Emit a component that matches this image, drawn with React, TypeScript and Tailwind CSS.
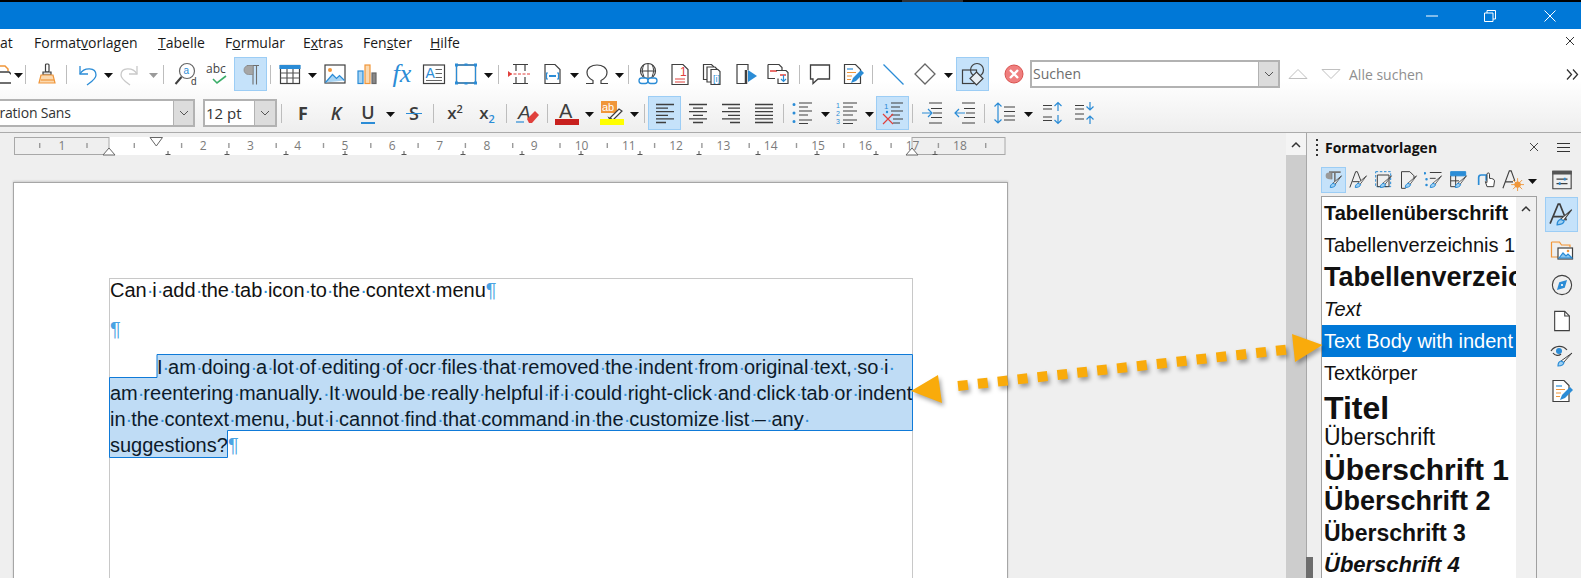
import React from "react";

const D = "#3f3f3f";
const B = "#2b8cd6";
const O = "#f0963a";
const R = "#e0403c";

function I({ children, s = 24 }: { children: React.ReactNode; s?: number }) {
  return (
    <svg width={s} height={s} viewBox="0 0 24 24" fill="none" strokeWidth="1.2" stroke={D} className="shrink-0">
      {children}
    </svg>
  );
}

function Btn({ children, on, x = "" }: { children?: React.ReactNode; on?: boolean; x?: string }) {
  return (
    <div
      className={`flex h-[34px] w-[32px] shrink-0 items-center justify-center ${
        on ? "w-[33px] border border-[#9ccdf5] bg-[#c5e2fa]" : ""
      } ${x}`}
    >
      {children}
    </div>
  );
}

function Dd({ c = "#111", x = "" }: { c?: string; x?: string }) {
  return (
    <div className={`flex h-[34px] w-[13px] shrink-0 items-center justify-center ${x}`}>
      <svg width="9" height="5" viewBox="0 0 9 5" className="mt-[2px]">
        <path d="M0 0h9L4.5 5z" fill={c} />
      </svg>
    </div>
  );
}

function Sep({ x = "" }: { x?: string }) {
  return (
    <div className={`flex h-[34px] w-[7px] shrink-0 items-center justify-center ${x}`}>
      <div className="h-[19px] w-px bg-[#bdbdbd]" />
    </div>
  );
}

function Chev({ c = "#555" }: { c?: string }) {
  return (
    <svg width="12" height="8" viewBox="0 0 12 8" fill="none" stroke={c} strokeWidth="1">
      <path d="M2 2l4 4 4-4" />
    </svg>
  );
}

function AlignIcon({ rows }: { rows: [number, number][] }) {
  return (
    <I>
      <path strokeWidth="1.3" d={rows.map(([a, b], i) => `M${a} ${3.5 + i * 3.6}H${b}`).join("")} />
    </I>
  );
}

function SBrush() {
  return (
    <g>
      <path d="M21 7L13 17.5l-2.5-1.5z" fill="#fff" stroke={D} strokeWidth="1" />
      <path d="M11 16c-2 .5-3.5 2.5-3.5 5 3 0 6-1 6.5-3.5z" fill="#9fd0f2" stroke={B} strokeWidth="1.2" />
    </g>
  );
}

function Word({ text }: { text: string }) {
  const parts = text.split(" ");
  return (
    <>
      {parts.map((p, i) => (
        <React.Fragment key={i}>
          {p}
          {i < parts.length - 1 && (
            <span className="inline-block w-[5.56px] text-center text-[#2f8fd8]">·</span>
          )}
        </React.Fragment>
      ))}
    </>
  );
}

const rulerNums = [2, 3, 4, 5, 6, 7, 8, 9, 10, 11, 12, 13, 14, 15, 16, 17, 18];
const halfTicks = Array.from({ length: 21 }, (_, i) => 39 + i * 47.3);
const tabStops = Array.from({ length: 14 }, (_, i) => 168 + i * 59);

function Ruler() {
  return (
    <svg width="1010" height="20" viewBox="0 136 1010 20" className="block">
      <rect x="109" y="137" width="803" height="18" fill="#fff" />
      <rect x="14.5" y="137.5" width="94.5" height="17" fill="#efefef" stroke="#a8a8a8" />
      <rect x="912" y="137.5" width="93" height="17" fill="#efefef" stroke="#a8a8a8" />
      {halfTicks.map((x) => (
        <rect key={x} x={x} y="143" width="1.4" height="5" fill="#9a9a9a" />
      ))}
      {tabStops.map((x) => (
        <path key={x} d={`M${x} 151v3.5M${x - 2.5} 154.5h5`} stroke="#555" strokeWidth="1" />
      ))}
      <text x="62" y="150" fontSize="12" fill="#7b7b7b" textAnchor="middle" fontFamily="'Open Sans',sans-serif">
        1
      </text>
      {rulerNums.map((n) => (
        <text
          key={n}
          x={109 + n * 47.3 - 0.5}
          y="150"
          fontSize="12"
          fill="#7b7b7b"
          textAnchor="middle"
          fontFamily="'Open Sans',sans-serif"
        >
          {n}
        </text>
      ))}
      <path d="M150 137.5h12.5l-6.2 8.5z" fill="#fff" stroke="#666" />
      <path d="M103 155l6-7 6 7z" fill="#fff" stroke="#666" />
      <path d="M906 155l6-7 6 7z" fill="#fff" stroke="#666" />
    </svg>
  );
}

function DocPage() {
  return (
    <div className="ml-[13px] mt-[26px] h-[400px] w-[995px] border border-[#a6a6a6] bg-white pl-[95px] pt-[95px] shadow-[0_-1px_2px_rgba(0,0,0,0.15)]">
      <div className="relative h-[300px] w-[804px] border-x border-t border-[#c8c8c8] font-['Liberation_Sans',sans-serif] text-[20px] text-[#111]">
        <svg width="806" height="182" viewBox="0 0 806 182" className="absolute left-[-1px] top-[-1px]">
          <path
            d="M48 76.5H803.5V152.5H118.5V179.5H.5V99.5H48z"
            fill="#bfdcf5"
            stroke="#0f7ad8"
            strokeWidth="1"
          />
        </svg>
        <div className="relative whitespace-nowrap">
          <div className="h-[22px] leading-[22px]">
            <Word text="Can i add the tab icon to the context menu" />
            <span className="text-[#4aa3e3]">¶</span>
          </div>
          <div className="mt-[17px] h-[22px] leading-[22px] text-[#4aa3e3]">¶</div>
          <div className="mt-[14px] text-[#0c1a2a]">
            <div className="h-[26px] pl-[47px] leading-[26px]">
              <Word text="I am doing a lot of editing of ocr files that removed the indent from original text, so i " />
            </div>
            <div className="h-[26px] leading-[26px]">
              <Word text="am reentering manually. It would be really helpful if i could right-click and click tab or indent" />
            </div>
            <div className="h-[26px] leading-[26px]">
              <Word text="in the context menu, but i cannot find that command in the customize list – any " />
            </div>
            <div className="h-[26px] leading-[26px]">
              <Word text="suggestions?" />
              <span className="text-[#4aa3e3]">¶</span>
            </div>
          </div>
        </div>
      </div>
    </div>
  );
}

function Row1() {
  return (
    <div className="flex h-[34px] items-center whitespace-nowrap">
      <div className="flex h-[34px] w-[11px] shrink-0 items-center overflow-hidden">
        <svg width="15" height="24" viewBox="0 0 15 24" fill="none" className="shrink-0">
          <path d="M0 4h5l3 3v2" stroke={O} strokeWidth="1.5" />
          <path d="M0 10h9l3 3v8H0" stroke={D} strokeWidth="1.3" />
        </svg>
      </div>
      <Dd x="ml-[1px]" />
      <Sep x="ml-[-3px]" />
      <Btn x="ml-[2px]">
        <I>
          <rect x="10.5" y="2" width="3.5" height="8" rx="1" stroke={D} fill="#fff" />
          <path d="M8 10h8v3H8z" stroke={D} fill="#ddd" />
          <path d="M6 13h12l2 8H4z" stroke={O} fill="#fbd9b0" />
          <path d="M6 18h13" stroke={O} />
        </I>
      </Btn>
      <Sep />
      <Btn>
        <I>
          <path d="M6 4v8h8" stroke={B} strokeWidth="1.3" />
          <path d="M6 12C10 5 22 5 22 13c0 4-5 7-9 10" stroke={B} strokeWidth="1.3" />
        </I>
      </Btn>
      <Dd />
      <Btn>
        <I>
          <path d="M18 4v8h-8" stroke="#c9c9c9" strokeWidth="1.3" />
          <path d="M18 12C14 5 2 5 2 13c0 4 5 7 9 10" stroke="#c9c9c9" strokeWidth="1.3" />
        </I>
      </Btn>
      <Dd c="#9a9a9a" />
      <Sep />
      <Btn x="ml-[3px]">
        <I>
          <circle cx="13" cy="9" r="7.5" stroke="#666" />
          <path d="M7.5 15L1.5 22" stroke={D} strokeWidth="2" />
          <text x="9.5" y="12" fontSize="10" fill={B} stroke="none" fontFamily="'Liberation Sans',sans-serif">
            a
          </text>
          <text x="17" y="23" fontSize="10" fill={D} stroke="none" fontFamily="'Liberation Sans',sans-serif">
            d
          </text>
        </I>
      </Btn>
      <Btn>
        <svg width="26" height="24" viewBox="0 0 26 24" fill="none" className="shrink-0">
          <text x="1" y="11" fontSize="12" fill="#444" fontFamily="'Open Sans',sans-serif">
            abc
          </text>
          <path d="M8 17l4 4 9-7" stroke="#3cae6a" strokeWidth="1.6" />
        </svg>
      </Btn>
      <Btn on>
        <I>
          <path d="M8 3.5h12M14 3.5V22.500M17.500 3.500V22.500" stroke="#6f6f6f" strokeWidth="1.100" />
          <path d="M14 3.5H9.500a4.500 4.500 0 000 9H14z" fill="#a6a6a6" stroke="#8a8a8a" strokeWidth=".8" />
        </I>
      </Btn>
      <Sep />
      <Btn>
        <I>
          <rect x="2.5" y="3.500" width="19" height="18" stroke={D} />
          <path d="M2 3.5h20v3H2z" fill={B} stroke={B} />
          <path d="M2.5 11h19M2.5 16h19M9 7v14M15 7v14" stroke="#555" />
        </I>
      </Btn>
      <Dd />
      <Btn>
        <I>
          <rect x="2" y="3" width="20" height="18" stroke={D} />
          <circle cx="7" cy="8" r="2" fill={O} stroke="none" />
          <path d="M2.5 20.5l7-8 4 4 3-3 5 5" fill="#a8d4f3" stroke={B} />
        </I>
      </Btn>
      <Btn>
        <I>
          <rect x="3" y="9" width="5" height="12.5" fill="#a8d4f3" stroke={B} />
          <rect x="10" y="3" width="5" height="18.5" fill="#fbd9b0" stroke={O} />
          <rect x="17" y="11" width="4" height="10.5" fill="#888" stroke="#666" />
        </I>
      </Btn>
      <Btn x="ml-[3px]">
        <span className="font-['Liberation_Serif',serif] text-[26px] italic leading-none text-[#2b8cd6]">fx</span>
      </Btn>
      <Btn>
        <I>
          <rect x="1.5" y="3" width="21" height="18.5" stroke={D} />
          <text x="3.5" y="16" fontSize="14" fill={B} stroke="none" fontFamily="'Liberation Sans',sans-serif">
            A
          </text>
          <path d="M13.5 7.5H20M13.5 11.5H20M13.5 15.5H20M4 18.5H20" stroke="#666" />
        </I>
      </Btn>
      <Btn>
        <I>
          <rect x="2.5" y="3" width="19" height="18" stroke={D} />
          <path d="M1 1.5h3v3H1zM20 1.5h3v3h-3zM1 19.5h3v3H1zM20 19.5h3v3h-3zM10.5 1.5h3v2h-3zM10.5 20.5h3v2h-3z" fill={B} stroke="none" />
          <rect x="2.5" y="3" width="19" height="18" stroke={B} />
        </I>
      </Btn>
      <Dd />
      <Sep />
      <Btn x="ml-[2px]">
        <I>
          <path d="M5 2.5h15M5 21.5h15M8 3v6M17 3v6M8 15v6M17 15v6" stroke={D} />
          <path d="M1 12h22" stroke={R} strokeDasharray="3 1.5" />
          <path d="M0 9l4 3-4 3z" fill={R} stroke="none" />
        </I>
      </Btn>
      <Btn>
        <I>
          <path d="M5 2.5h10l5 5v14H5z" stroke={D} />
          <path d="M8 11H6.5v6H8M17 11h1.500v6H17" stroke={B} />
          <path d="M9 14h7" stroke={B} strokeWidth="2" />
        </I>
      </Btn>
      <Dd />
      <Btn>
        <svg width="26" height="24" viewBox="0 0 26 24" fill="none" stroke={D} strokeWidth="1.2">
          <path d="M2 21.500h7v-3C4 16 3 12 3 10.500 3 6 7.500 3 13 3s10 3 10 7.500c0 1.500-1 5.500-6 8v3h7" />
        </svg>
      </Btn>
      <Dd />
      <Sep x="ml-[-1px]" />
      <Btn>
        <I>
          <circle cx="12" cy="9" r="7.500" stroke={D} />
          <path d="M4.500 9h15M12 1.500v15M8 2.500c-2 4-2 8 0 12M16 2.500c2 4 2 8 0 12" stroke={D} strokeWidth="1" />
          <rect x="3" y="16" width="9" height="5.500" rx="2.700" stroke={B} fill="#fff" strokeWidth="1.300" />
          <rect x="12" y="16" width="9" height="5.500" rx="2.700" stroke={B} fill="#fff" strokeWidth="1.300" />
        </I>
      </Btn>
      <Btn>
        <I>
          <path d="M4 2.500h11l5 5v15H4z" stroke={D} />
          <text x="12" y="14" fontSize="12" fill={R} stroke="none" fontFamily="'Liberation Sans',sans-serif">
            1
          </text>
          <path d="M7 17h10M7 20h10" stroke={R} />
        </I>
      </Btn>
      <Btn x="ml-[2px]">
        <I>
          <path d="M1.500 2.500h8l2 2v13h-10z" stroke={D} fill="#fff" />
          <path d="M5 5h8l2 2v13H5z" stroke={D} fill="#fff" />
          <path d="M9 7.500h7l2 2v13H9z" stroke={D} fill="#fff" />
          <text x="11" y="20" fontSize="9" fill={B} stroke="none" fontFamily="'Liberation Sans',sans-serif">
            [i]
          </text>
        </I>
      </Btn>
      <Btn>
        <I>
          <path d="M14 8V2.500H3v19h8" stroke={D} />
          <path d="M12 8v14" stroke={D} strokeWidth="2.500" />
          <path d="M14 8l9 6-9 6z" fill={B} stroke="none" />
        </I>
      </Btn>
      <Btn>
        <I>
          <path d="M2 2.500h11l3 3v3M2 2.500v14h7" stroke={D} />
          <path d="M4 9h7" stroke={R} strokeWidth="1.500" />
          <path d="M10 8.500h10l2 2v11H12v-5" stroke={D} />
          <path d="M14 13h6" stroke={R} strokeWidth="1.500" />
          <path d="M17.500 13v6M15 17l2.500 2.500L20 17" stroke={B} />
        </I>
      </Btn>
      <Sep x="ml-[2px]" />
      <Btn x="ml-[1px]">
        <I>
          <path d="M2.500 3h19v14H10l-5 4.500V17H2.500z" stroke={D} strokeWidth="1.300" />
        </I>
      </Btn>
      <Btn x="ml-[1px]">
        <I>
          <path d="M3.500 2.500h11l5 5v14h-16z" stroke={D} />
          <path d="M6 7h6" stroke={B} />
          <path d="M6 10.500h9M6 14h5M6 17.500h4" stroke={O} />
          <path d="M10 21l2-5 8-8 3 3-8 8z" fill={B} stroke="none" />
        </I>
      </Btn>
      <Sep />
      <Btn x="ml-[1px]">
        <I>
          <path d="M2.500 2.500l20 20" stroke={B} strokeWidth="1.300" />
        </I>
      </Btn>
      <Btn>
        <I>
          <path d="M12 2l10 10-10 10L2 12z" stroke="#666" strokeWidth="1.300" />
        </I>
      </Btn>
      <Dd x="ml-[1px]" />
      <Btn on x="ml-[1px]">
        <I>
          <rect x="1.500" y="8" width="14" height="13.500" stroke={D} fill="none" />
          <circle cx="16" cy="8" r="6.500" stroke={D} fill="none" />
          <path d="M15.500 10l6.500 6.500-6.500 6.500L9 16.500z" stroke={D} fill="#e8eef3" />
        </I>
      </Btn>
      <Btn x="ml-[9px]">
        <svg width="20" height="20" viewBox="0 0 20 20">
          <circle cx="10" cy="10" r="9" fill="#ef7e7e" stroke="#d9534f" />
          <path d="M6 6l8 8M14 6l-8 8" stroke="#fff" strokeWidth="2.400" />
        </svg>
      </Btn>
      <div className="flex h-[28px] w-[250px] shrink-0 border-2 border-[#b2b2b2] bg-white">
        <div className="flex-1 pl-[1px] font-['Open_Sans',sans-serif] text-[14px] leading-[24px] text-[#6d6d6d]">Suchen</div>
        <div className="flex w-[20px] items-center justify-center border-l border-[#b2b2b2] bg-[#dcdcdc]">
          <Chev />
        </div>
      </div>
      <Btn x="ml-[2px]">
        <svg width="20" height="12" viewBox="0 0 20 12" fill="none" stroke="#c0c0c0">
          <path d="M1 10.500L10 1.500l9 9z" />
        </svg>
      </Btn>
      <Btn x="ml-[1px]">
        <svg width="20" height="12" viewBox="0 0 20 12" fill="none" stroke="#c0c0c0">
          <path d="M1 1.500L10 10.500l9-9z" />
        </svg>
      </Btn>
      <div className="ml-[2px] font-['Open_Sans',sans-serif] text-[14px] text-[#8f8f8f]">Alle suchen</div>
      <svg width="13" height="11" viewBox="0 0 13 11" fill="none" stroke="#333" strokeWidth="1.300" className="ml-auto mr-[2px]">
        <path d="M1 .5l4.500 5L1 10.500M7 .5l4.500 5L7 10.500" />
      </svg>
    </div>
  );
}

function Row2() {
  const g = "font-['Open_Sans',sans-serif]";
  return (
    <div className="mt-[5px] flex h-[34px] items-center whitespace-nowrap">
      <div className="flex h-[28px] w-[195px] shrink-0 overflow-hidden border-y-2 border-r-2 border-[#b2b2b2] bg-white">
        <div className={`w-[173px] overflow-hidden text-[14px] leading-[24px] tracking-[-0.2px] text-[#333] ${g}`}>
          <div className="ml-[-27px]">Liberation Sans</div>
        </div>
        <div className="flex flex-1 items-center justify-center border-l border-[#b2b2b2] bg-[#dcdcdc]">
          <Chev />
        </div>
      </div>
      <div className="ml-[8px] flex h-[28px] w-[74px] shrink-0 border-2 border-[#b2b2b2] bg-white">
        <div className={`flex-1 pl-[1px] text-[15px] leading-[24px] text-[#333] ${g}`}>12 pt</div>
        <div className="flex w-[21px] items-center justify-center border-l border-[#b2b2b2] bg-[#dcdcdc]">
          <Chev />
        </div>
      </div>
      <Sep x="ml-[1px]" />
      <Btn x="ml-[2px]">
        <span className={`text-[18px] font-bold text-[#3c3c3c] ${g}`}>F</span>
      </Btn>
      <Btn x="ml-[1px]">
        <span className={`text-[18px] font-semibold italic text-[#3c3c3c] ${g}`}>K</span>
      </Btn>
      <Btn>
        <span className={`border-b-2 border-[#2b8cd6] text-[18px] font-semibold leading-[20px] text-[#3c3c3c] ${g}`}>U</span>
      </Btn>
      <Dd />
      <Btn x="ml-[1px]">
        <span className={`relative text-[18px] font-semibold text-[#3c3c3c] ${g}`}>
          S<span className="absolute left-[-3px] right-[-3px] top-[13px] h-px bg-[#2b8cd6]" />
        </span>
      </Btn>
      <Sep />
      <Btn x="ml-[2px]">
        <span className={`text-[17px] font-semibold text-[#3c3c3c] ${g}`}>
          x<span className="relative top-[-6px] text-[11px] text-[#3c3c3c]">2</span>
        </span>
      </Btn>
      <Btn>
        <span className={`text-[17px] font-semibold text-[#3c3c3c] ${g}`}>
          x<span className="relative top-[4px] text-[11px] text-[#2b8cd6]">2</span>
        </span>
      </Btn>
      <Sep />
      <Btn x="ml-[2px]">
        <I>
          <text x="2" y="18" fontSize="19" fill={D} stroke="none" fontFamily="'Liberation Sans',sans-serif" fontStyle="italic">
            A
          </text>
          <path d="M0 21h8" stroke={B} />
          <path d="M11 18l8-8 4 4-7 8h-3z" fill={R} stroke="none" />
        </I>
      </Btn>
      <Sep />
      <Btn>
        <I>
          <text x="4" y="17" fontSize="20" fill={D} stroke="none" fontFamily="'Liberation Sans',sans-serif">
            A
          </text>
          <rect x="0" y="18" width="24" height="6" fill="#c8201e" stroke="none" />
        </I>
      </Btn>
      <Dd />
      <Btn>
        <I>
          <rect x="1" y="0" width="16" height="12" fill={O} stroke="none" />
          <text x="2" y="10" fontSize="11" fill="#fff" stroke="none" fontFamily="'Liberation Sans',sans-serif">
            ab
          </text>
          <path d="M10 17l9-9 3 2-9 9z" fill="#fff" stroke={D} />
          <path d="M9 17l3 2-2 0z" fill={D} />
          <rect x="0" y="18" width="24" height="6" fill="#ffff00" stroke="none" />
        </I>
      </Btn>
      <Dd />
      <Sep />
      <Btn on>
        <AlignIcon rows={[[3, 21], [3, 15], [3, 21], [3, 15], [3, 21], [3, 13]]} />
      </Btn>
      <Btn x="w-[33px]">
        <AlignIcon rows={[[3, 21], [7, 17], [3, 21], [7, 17], [3, 21], [7, 17]]} />
      </Btn>
      <Btn x="w-[33px]">
        <AlignIcon rows={[[3, 21], [9, 21], [3, 21], [9, 21], [3, 21], [11, 21]]} />
      </Btn>
      <Btn x="w-[33px]">
        <AlignIcon rows={[[3, 21], [3, 21], [3, 21], [3, 21], [3, 21], [3, 21]]} />
      </Btn>
      <Sep />
      <Btn>
        <I>
          <path d="M3 3.500h.01M3 12h.01M3 20.500h.01" stroke={B} strokeWidth="3" strokeLinecap="round" />
          <path d="M8 2h13M8 6h9M8 10h13M8 14h9M8 19h13M8 22.500h9" stroke={D} />
        </I>
      </Btn>
      <Dd />
      <Btn>
        <svg width="24" height="24" viewBox="0 0 24 24" fill="none" stroke={D}>
          <text x="0" y="7" fontSize="7" fill={B} stroke="none" fontFamily="'Liberation Sans',sans-serif">1</text>
          <text x="0" y="15" fontSize="7" fill={B} stroke="none" fontFamily="'Liberation Sans',sans-serif">2</text>
          <text x="0" y="23" fontSize="7" fill={B} stroke="none" fontFamily="'Liberation Sans',sans-serif">3</text>
          <path d="M7 2h14M7 6h10M7 10h14M7 14h10M7 19h14M7 22.500h10" />
        </svg>
      </Btn>
      <Dd x="ml-[-1px]" />
      <Btn on>
        <I>
          <text x="3" y="8" fontSize="8" fill={B} stroke="none" fontFamily="'Liberation Sans',sans-serif">1</text>
          <circle cx="6" cy="11" r="1.200" fill={B} stroke="none" />
          <path d="M10 2h12M10 6h9M10 10h12M10 14h9M12 18h10M12 22h7" stroke={D} />
          <path d="M2 13l10 10M12 13L2 23" stroke={R} strokeWidth="1.200" />
        </I>
      </Btn>
      <Sep />
      <Btn>
        <I>
          <path d="M9 2h13M11 7.500h11M13 12h9M11 16.500h11M9 22h13" stroke={D} />
          <path d="M2 12h10M8 8l4 4-4 4" stroke={B} />
        </I>
      </Btn>
      <Btn x="ml-[1px]">
        <I>
          <path d="M9 2h13M11 7.500h11M13 12h9M11 16.500h11M9 22h13" stroke={D} />
          <path d="M2 12h10M6 8l-4 4 4 4" stroke={B} />
        </I>
      </Btn>
      <Sep />
      <Btn x="ml-[1px]">
        <I>
          <path d="M5 2v20M1.500 5.500L5 2l3.500 3.500M1.500 18.500L5 22l3.500-3.500" stroke={B} />
          <path d="M11 6h11M11 10.500h11M11 15h11M11 19h11" stroke={D} />
        </I>
      </Btn>
      <Dd x="ml-[1px]" />
      <Btn x="ml-[2px]">
        <I>
          <path d="M2 4.500h9M2 8h9M2 16h9M2 19.500h9" stroke={D} />
          <path d="M17 10V1.500M13.500 5L17 1.500 20.500 5M17 14v8.500M13.500 19l3.500 3.500 3.500-3.500" stroke={B} />
        </I>
      </Btn>
      <Btn>
        <I>
          <path d="M2 4.500h9M2 8h9M2 13h9M2 18h9" stroke={D} />
          <path d="M17 1v8M13.500 5.500L17 9l3.500-3.500M17 23v-8M13.500 18.500L17 15l3.500 3.500" stroke={B} />
        </I>
      </Btn>
    </div>
  );
}

const styleIcons = (
  <>
    <div className="flex h-[26px] w-[25px] items-center justify-center border border-[#9ccdf5] bg-[#c5e2fa]">
      <I s={20}>
        <path d="M6 2.500h14M13 3v15M9 3v8" stroke="#777" strokeWidth="2" />
        <path d="M9 3H6a4 4 0 000 8h3z" fill="#999" stroke="none" />
        <SBrush />
      </I>
    </div>
    <div className="flex h-[26px] w-[25px] items-center justify-center">
      <I s={20}>
        <path d="M1 21L8 2h2l5 13M4 14h8" stroke={D} strokeWidth="1.200" />
        <SBrush />
      </I>
    </div>
    <div className="flex h-[26px] w-[25px] items-center justify-center">
      <I s={20}>
        <rect x="2" y="2" width="18" height="18" stroke={B} strokeDasharray="3 2" />
        <path d="M4 6h14v14H4z" stroke={D} />
        <SBrush />
      </I>
    </div>
    <div className="flex h-[26px] w-[25px] items-center justify-center">
      <I s={20}>
        <path d="M3 2h10l5 5v3M3 2v20h5" stroke={D} />
        <SBrush />
      </I>
    </div>
    <div className="flex h-[26px] w-[25px] items-center justify-center">
      <I s={20}>
        <path d="M1 4h.01M3 11h.01M3 18h.01" stroke={B} strokeWidth="3" strokeLinecap="round" />
        <path d="M7 3h14M7 10h7" stroke={D} />
        <SBrush />
      </I>
    </div>
    <div className="flex h-[26px] w-[25px] items-center justify-center">
      <I s={20}>
        <path d="M2 2h18v5H2z" fill={B} stroke={B} />
        <path d="M2 7v13h7M8 7v13M2 13h10" stroke={D} />
        <SBrush />
      </I>
    </div>
    <div className="ml-[3px] flex h-[26px] w-[25px] items-center justify-center">
      <I s={20}>
        <path d="M2 18V9c0-2 1-3 3-3h6v7" stroke={B} strokeWidth="2" />
        <path d="M12 20l-2-6 2 1V5c0-2 3-2 3 0v5c3 0 6 1 6 3l-1 7z" fill="#fff" stroke={D} />
      </I>
    </div>
    <div className="ml-[1px] flex h-[26px] w-[25px] items-center justify-center">
      <I s={22}>
        <path d="M1 21L8 2h2l4 11M4 14h8" stroke={D} strokeWidth="1.200" />
        <circle cx="17" cy="17" r="3.500" fill={O} stroke="none" />
        <path d="M17 10v14M10 17h14M12 12l10 10M22 12l-10 10" stroke={O} strokeWidth="1" />
      </I>
    </div>
  </>
);

const items: { t: string; c: string }[] = [
  { t: "Tabellenüberschrift", c: "h-[32px] text-[20px] font-bold leading-[32px] text-[#111]" },
  { t: "Tabellenverzeichnis 1", c: "h-[32px] text-[20px] leading-[32px] text-[#111]" },
  { t: "Tabellenverzeichnis", c: "h-[32px] text-[27px] font-bold leading-[32px] text-[#111]" },
  { t: "Text", c: "h-[32px] text-[20px] italic leading-[32px] text-[#111]" },
  { t: "Text Body with indent", c: "h-[32px] bg-[#0078d7] text-[20px] leading-[32px] text-white" },
  { t: "Textkörper", c: "h-[32px] text-[20px] leading-[32px] text-[#111]" },
  { t: "Titel", c: "h-[35px] text-[32px] font-bold leading-[38px] text-[#111]" },
  { t: "Überschrift", c: "h-[29px] text-[23px] leading-[26px] text-[#111]" },
  { t: "Überschrift 1", c: "h-[33px] text-[30px] font-bold leading-[34px] text-[#111]" },
  { t: "Überschrift 2", c: "h-[32px] text-[27px] font-bold leading-[31px] text-[#111]" },
  { t: "Überschrift 3", c: "h-[31px] text-[23px] font-bold leading-[31px] text-[#111]" },
  { t: "Überschrift 4", c: "h-[31px] text-[22px] font-bold italic leading-[31px] text-[#111]" },
];

function Sidebar() {
  return (
    <div className="flex flex-1 overflow-hidden bg-[#efefef]">
      <div className="w-[238px] shrink-0">
        <div className="flex h-[34px] items-center pb-[6px]">
          <div className="ml-[9px] flex flex-col gap-[3px]">
            <div className="h-[2px] w-[2px] bg-[#333]" />
            <div className="h-[2px] w-[2px] bg-[#333]" />
            <div className="h-[2px] w-[2px] bg-[#333]" />
            <div className="h-[2px] w-[2px] bg-[#333]" />
          </div>
          <div className="ml-[7px] font-['Open_Sans',sans-serif] text-[14px] font-bold text-[#111]">Formatvorlagen</div>
          <svg width="12" height="12" viewBox="0 0 12 12" stroke="#444" className="ml-auto mr-[5px]">
            <path d="M2 2l8 8M10 2l-8 8" />
          </svg>
        </div>
        <div className="ml-[14px] flex h-[26px] items-center">
          {styleIcons}
          <Dd x="ml-[1px]" />
        </div>
        <div className="ml-[14px] mt-[3px] flex h-[400px] w-[216px] border border-[#a0a0a0] bg-white">
          <div className="w-[194px] shrink-0 overflow-hidden whitespace-nowrap font-['Liberation_Sans',sans-serif]">
            {items.map((it) => (
              <div key={it.t} className={`pl-[2px] ${it.c}`}>
                {it.t}
              </div>
            ))}
          </div>
          <div className="flex flex-1 justify-center bg-[#f0f0f0] pt-[8px]">
            <svg width="10" height="7" viewBox="0 0 10 7" fill="none" stroke="#333" strokeWidth="1.500" className="shrink-0">
              <path d="M1 6l4-4 4 4" />
            </svg>
          </div>
        </div>
      </div>
      <div className="flex-1">
        <div className="flex h-[29px] items-center justify-center">
          <div className="flex h-[9px] w-[13px] flex-col justify-between">
            <div className="h-px bg-[#333]" />
            <div className="h-px bg-[#333]" />
            <div className="h-px bg-[#333]" />
          </div>
        </div>
        <div className="flex h-[35px] w-[33px] items-center justify-center">
          <I s={22}>
            <path d="M2 2.500h20v19H2z" stroke={D} />
            <path d="M2 2.500h20v3H2z" fill="#555" stroke="#555" />
            <path d="M6 11h12M6 16h12" stroke={D} />
            <path d="M15 9.500v3M9.500 14.500v3" stroke={B} strokeWidth="2" />
          </I>
        </div>
        <div className="flex h-[35px] w-[33px] items-center justify-center border border-[#9ccdf5] bg-[#c5e2fa]">
          <I s={26}>
            <path d="M1 20L8.500 2h1.500l6 15M4 13.500h9" stroke={D} strokeWidth="1.500" />
            <SBrush />
          </I>
        </div>
        <div className="flex h-[35px] w-[33px] items-center justify-center">
          <I s={24}>
            <path d="M1.500 4h8l2 3H20v2" stroke={O} fill="#fde4c8" />
            <path d="M1.500 4v15h7" stroke={O} />
            <rect x="8" y="10" width="14.500" height="11" fill="#fff" stroke={D} />
            <path d="M9 20l4-5 3 3 2-2 4 4z" fill="#8cc6ef" stroke={B} />
            <circle cx="18" cy="13" r="1.300" fill={O} stroke="none" />
          </I>
        </div>
        <div className="flex h-[36px] w-[33px] items-center justify-center">
          <I s={22}>
            <circle cx="12" cy="12" r="10.500" stroke={D} />
            <path d="M17.500 6.500l-2.500 8.500-8.500 2.500 2.500-8.500z" fill={B} stroke="none" />
            <circle cx="12" cy="12" r="1.200" fill="#fff" stroke="none" />
          </I>
        </div>
        <div className="flex h-[35px] w-[33px] items-center justify-center">
          <I s={22}>
            <path d="M4 1.500h11l5 5v16H4z" fill="#fff" stroke={D} />
            <path d="M15 1.500v5h5" stroke={D} />
          </I>
        </div>
        <div className="flex h-[36px] w-[33px] items-center justify-center">
          <I s={24}>
            <path d="M1 7c4-6 12-6 16-1M3 9c2 3 6 3 8 1" stroke={D} />
            <circle cx="9" cy="7" r="3" fill={B} stroke="none" />
            <path d="M22 9L13 19l-2-2z" fill="#fff" stroke={D} strokeWidth="1" />
            <path d="M11 17c-2 .5-3 2.500-3 5 3 0 5.500-1 6-3.500z" fill="#9fd0f2" stroke={B} strokeWidth="1.200" />
          </I>
        </div>
        <div className="flex h-[34px] w-[33px] items-center justify-center">
          <I s={24}>
            <path d="M3 1.500h11l5 5v16H3z" fill="#fff" stroke={D} />
            <path d="M6 7h6" stroke={B} />
            <path d="M6 10.500h9M6 14h5M6 17.500h4" stroke={O} />
            <path d="M10 21l2-5 8-8 3 3-8 8z" fill={B} stroke="none" />
          </I>
        </div>
      </div>
    </div>
  );
}

export default function App() {
  return (
    <div className="relative flex h-[578px] w-[1581px] flex-col overflow-hidden bg-white font-['Open_Sans',sans-serif]">
      <div className="flex h-[2px] shrink-0 bg-black">
        <div className="ml-[902px] h-[2px] w-[61px] bg-[#2f3338]" />
      </div>
      <div className="flex h-[27px] shrink-0 items-center justify-end bg-[#0078d7]">
        <svg width="12" height="2" viewBox="0 0 12 2" className="mr-[46px]">
          <path d="M0 1h12" stroke="#fff" />
        </svg>
        <svg width="12" height="12" viewBox="0 0 12 12" fill="none" stroke="#fff" className="mr-[48px]">
          <path d="M.5 3h8.500v8.500H.5zM3 3V.5h8.500V9H9" />
        </svg>
        <svg width="12" height="12" viewBox="0 0 12 12" fill="none" stroke="#fff" className="mr-[25px]">
          <path d="M.5.5l11 11M11.500.5l-11 11" />
        </svg>
      </div>
      <div className="flex h-[103px] shrink-0 flex-col bg-linear-to-b from-white from-50% to-[#eeeeee]">
        <div className="flex h-[27px] shrink-0 items-center whitespace-nowrap text-[14px] text-[#1a1a1a]">
          <span className="w-[34px]">at</span>
          <span className="w-[124px]">
            Format<u>v</u>orlagen
          </span>
          <span className="w-[67px]">
            <u>T</u>abelle
          </span>
          <span className="w-[78px]">
            F<u>o</u>rmular
          </span>
          <span className="w-[60px]">
            E<u>x</u>tras
          </span>
          <span className="w-[67px]">
            Fen<u>s</u>ter
          </span>
          <span>
            <u>H</u>ilfe
          </span>
          <svg width="10" height="10" viewBox="0 0 10 10" stroke="#333" className="ml-auto mr-[6px] mt-[-3px]">
            <path d="M1 1l8 8M9 1l-8 8" />
          </svg>
        </div>
        <div className="mt-[1px]">
          <Row1 />
          <Row2 />
        </div>
      </div>
      <div className="h-[1px] shrink-0 bg-[#ababab]" />
      <div className="flex min-h-0 flex-1">
        <div className="w-[1286px] shrink-0 overflow-hidden bg-[#efefef] pt-[3px]">
          <Ruler />
          <DocPage />
        </div>
        <div className="flex w-[21px] shrink-0 flex-col border-r border-[#a8a8a8] bg-[#f4f4f4]">
          <div className="flex h-[22px] shrink-0 items-center justify-center">
            <svg width="10" height="7" viewBox="0 0 10 7" fill="none" stroke="#333" strokeWidth="1.500">
              <path d="M1 6l4-4 4 4" />
            </svg>
          </div>
          <div className="flex-1 bg-[#cdcdcd]" />
        </div>
        <Sidebar />
      </div>
      <div className="absolute left-[1306px] top-[557px] h-[21px] w-[7px] bg-[#6d6d6d]" />
      <svg
        width="1581"
        height="578"
        viewBox="0 0 1581 578"
        className="pointer-events-none absolute left-0 top-0 drop-shadow-[2px_3px_2px_rgba(0,0,0,0.35)]"
      >
        <path d="M911 391L938 375 942 403z" fill="#f9ab0b" />
        <path d="M1322.500 345L1292 334 1295 362z" fill="#f9ab0b" />
        <path d="M958 386L1292 349" stroke="#f9ab0b" strokeWidth="10" strokeDasharray="10 10" fill="none" />
      </svg>
    </div>
  );
}
